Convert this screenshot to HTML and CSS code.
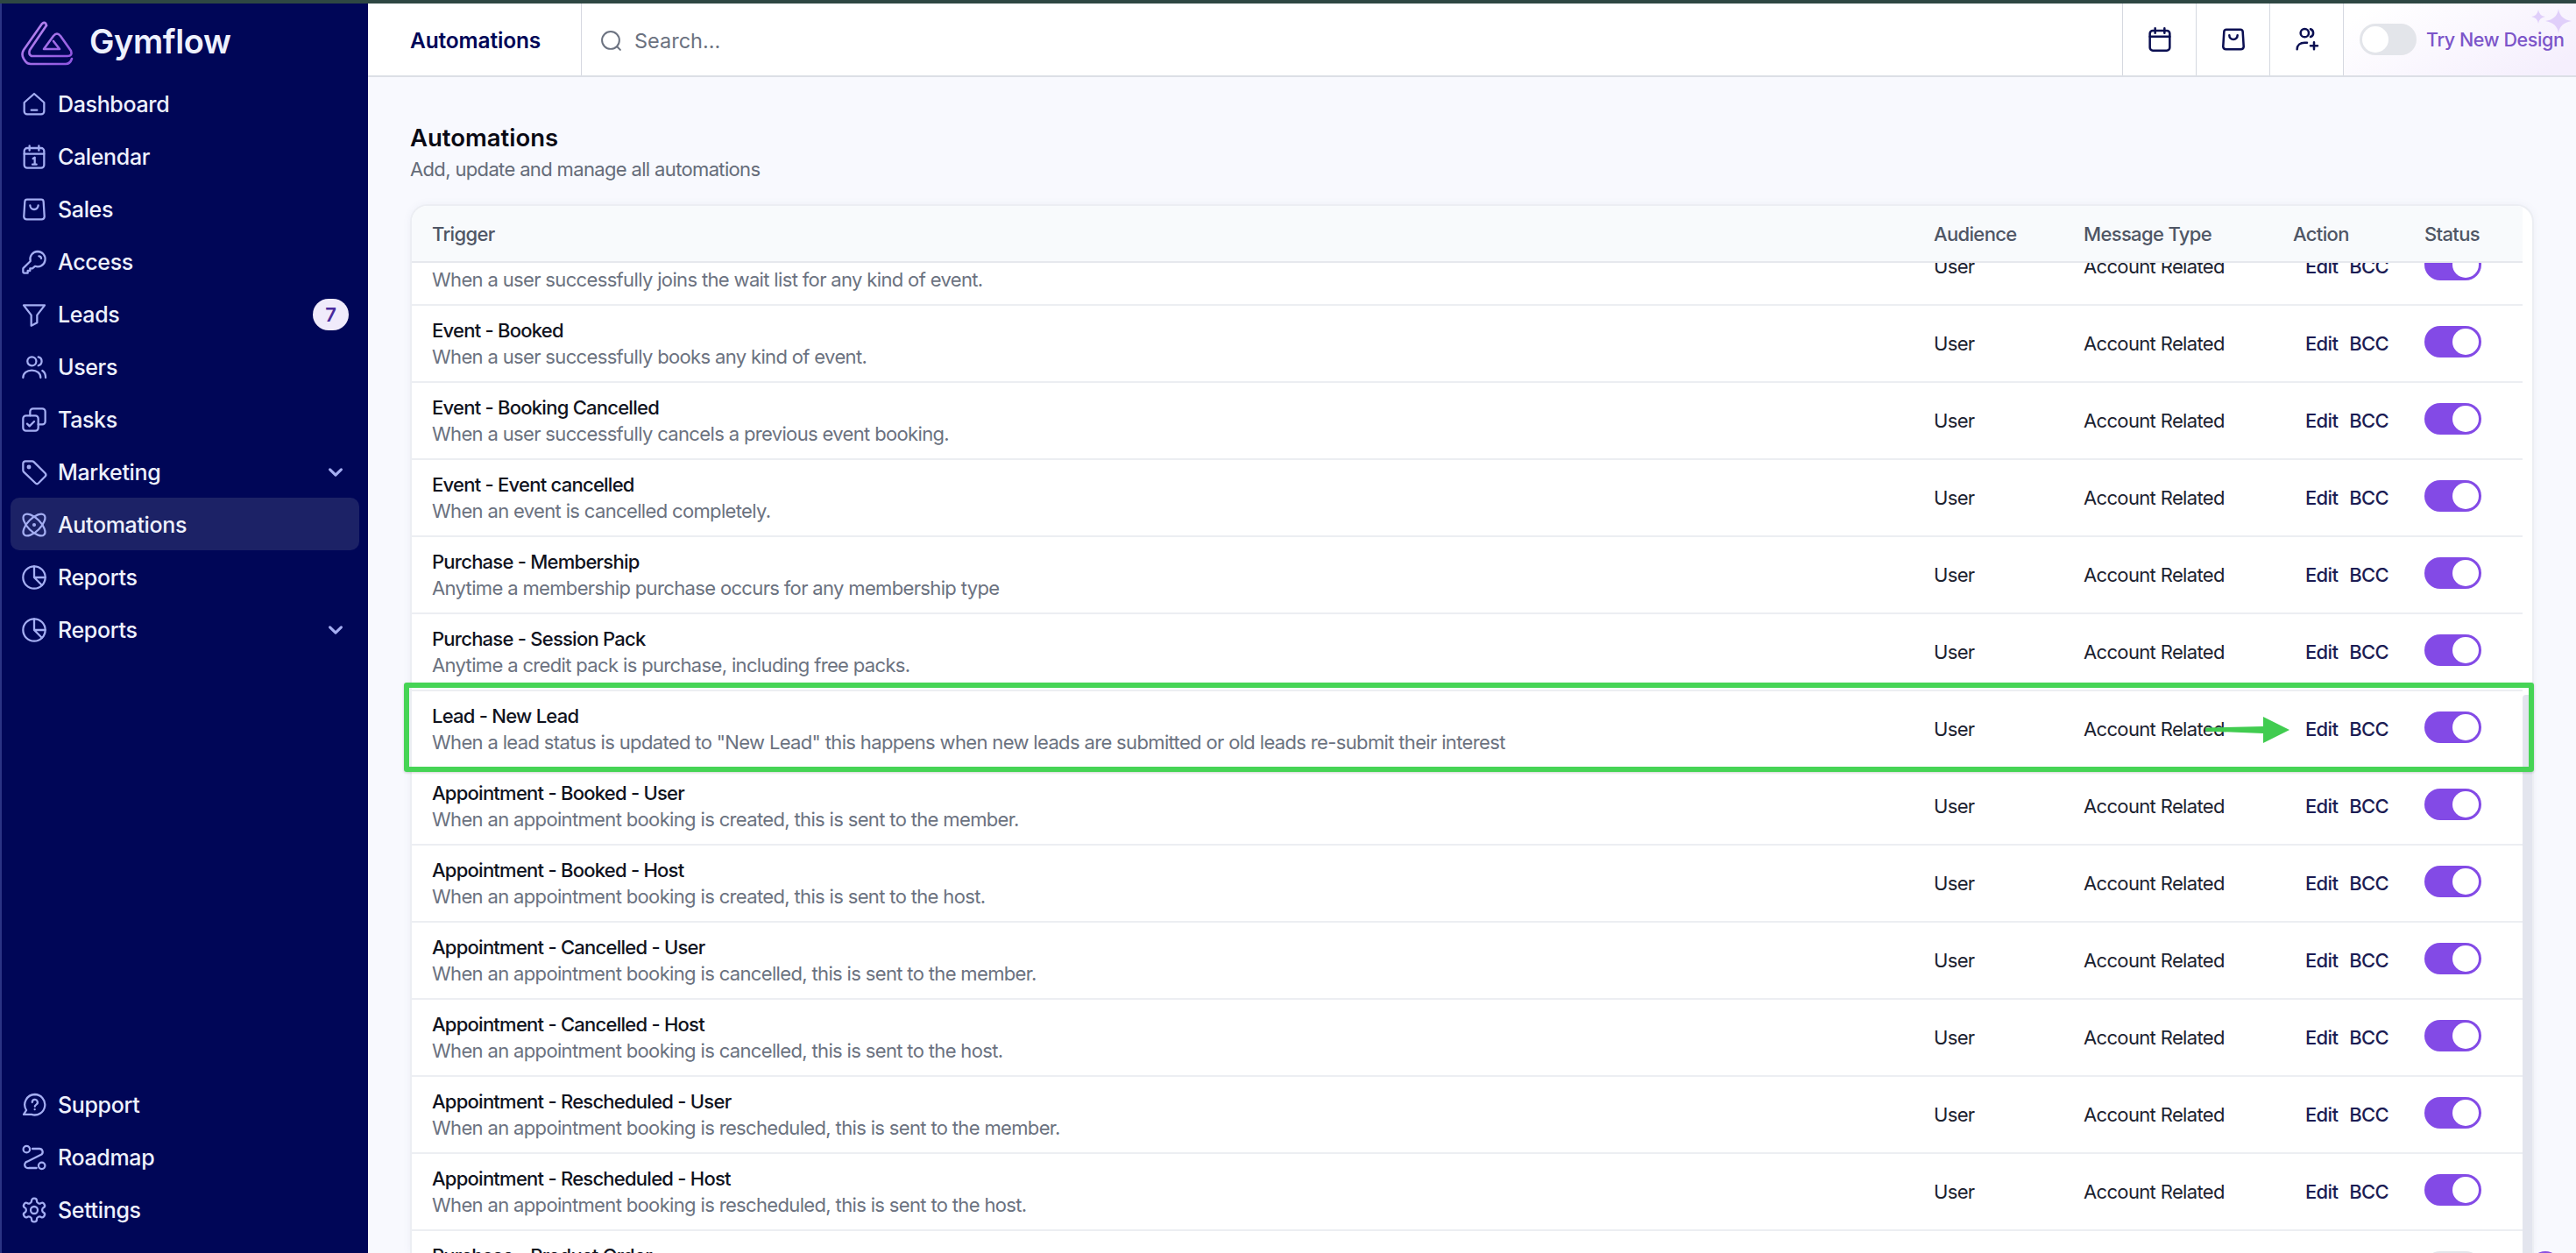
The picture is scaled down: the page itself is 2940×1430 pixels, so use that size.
FILE: index.html
```html
<!DOCTYPE html>
<html lang="en">
<head>
    <meta charset="UTF-8">
    <title>Automations - Gymflow</title>
    <link rel="stylesheet" href="styles.css">
</head>
<body>
    <svg class="sprite" xmlns="http://www.w3.org/2000/svg">
        <symbol id="i-home" viewBox="0 0 24 24"><path d="M3.5 10.5 12 3l8.5 7.500V18a2.500 2.500 0 0 1-2.500 2.500H6A2.500 2.500 0 0 1 3.500 18z"/><path d="M9.500 17h5"/></symbol>
        <symbol id="i-calendar-day" viewBox="0 0 24 24"><rect x="3.5" y="4.5" width="17" height="17" rx="2.5"/><path d="M3.500 9.500h17M8 2.500v4M16 2.500v4M11 13.500l1.500-1v6M10.500 18.500h3.500"/></symbol>
        <symbol id="i-calendar" viewBox="0 0 24 24"><rect x="3.5" y="4.5" width="17" height="17" rx="2.5"/><path d="M3.500 9.500h17M8 2.500v4M16 2.500v4"/></symbol>
        <symbol id="i-bag" viewBox="0 0 24 24"><path d="M6 3.500h12a2 2 0 0 1 2 1.800l.8 13a2.500 2.500 0 0 1-2.500 2.200H5.700a2.500 2.500 0 0 1-2.500-2.200l.8-13a2 2 0 0 1 2-1.800z"/><path d="M8.500 8.500a3.500 3.500 0 0 0 7 0"/></symbol>
        <symbol id="i-key" viewBox="0 0 24 24"><path d="M15 3a6.500 6.500 0 1 1-2.300 12.600L10.500 17.500H8.500v2h-2v2H3.500a1 1 0 0 1-1-1v-2.600a1 1 0 0 1 .3-.7l6-6A6.500 6.500 0 0 1 15 3z"/><path d="M16 7a2 2 0 0 1 2 2"/></symbol>
        <symbol id="i-funnel" viewBox="0 0 24 24"><path d="M3 4h18l-6.500 8.500V19l-5 2.500v-9z"/></symbol>
        <symbol id="i-users" viewBox="0 0 24 24"><circle cx="10" cy="7" r="3.8"/><path d="M2.500 21c0-3.800 3.200-6.300 7.500-6.300s7.500 2.500 7.500 6.300M15.500 3.300a3.800 3.800 0 0 1 0 7.400M19 15c1.700 1 2.800 3.200 2.800 6"/></symbol>
        <symbol id="i-tasks" viewBox="0 0 24 24"><rect x="2.5" y="8.5" width="13" height="13" rx="2.5"/><path d="M8.500 8.500V5A2.500 2.500 0 0 1 11 2.500h8A2.500 2.500 0 0 1 21.500 5v8.500a2.500 2.500 0 0 1-2.500 2.500h-3.500M6 15.500l2 2 4-4"/></symbol>
        <symbol id="i-tag" viewBox="0 0 24 24"><path d="M2.500 4.500a2 2 0 0 1 2-2h5.800a2 2 0 0 1 1.400.6l9.700 9.700a2 2 0 0 1 0 2.800l-5.600 5.600a2 2 0 0 1-2.800 0L3.100 11.700a2 2 0 0 1-.6-1.400z"/><circle cx="7.5" cy="7.5" r="1"/></symbol>
        <symbol id="i-atom" viewBox="0 0 24 24"><ellipse cx="12" cy="12" rx="12" ry="5.5" transform="rotate(45 12 12)"/><ellipse cx="12" cy="12" rx="12" ry="5.5" transform="rotate(-45 12 12)"/><circle cx="12" cy="12" r=".7"/></symbol>
        <symbol id="i-pie" viewBox="0 0 24 24"><circle cx="12" cy="12" r="9.5"/><path d="M12 2.500V12l6.700 6.700M12 12h9.500"/></symbol>
        <symbol id="i-chevron" viewBox="0 0 24 24"><path d="M5 8.500l7 7 7-7"/></symbol>
        <symbol id="i-support" viewBox="0 0 24 24"><path d="M12.500 3a8.800 8.800 0 1 1-2.700 17.200H3l2.300-3.700A8.800 8.800 0 0 1 12.500 3z"/><path d="M10.300 9.800a2.300 2.300 0 1 1 3.500 1.900c-.8.500-1.200.9-1.200 1.700M12.500 15.800v.1"/></symbol>
        <symbol id="i-road" viewBox="0 0 24 24"><circle cx="5.5" cy="5" r="2.8"/><circle cx="18.5" cy="19" r="2.8"/><path d="M10.500 4.500h6a2.800 2.800 0 0 1 1.800 4.900L6 15.500a2.800 2.800 0 0 0 1.500 5.500h6.500"/></symbol>
        <symbol id="i-gear" viewBox="0 0 24 24"><path d="M12.22 2h-.44a2 2 0 0 0-2 2v.18a2 2 0 0 1-1 1.73l-.43.25a2 2 0 0 1-2 0l-.15-.08a2 2 0 0 0-2.73.73l-.22.38a2 2 0 0 0 .73 2.73l.15.1a2 2 0 0 1 1 1.72v.51a2 2 0 0 1-1 1.74l-.15.09a2 2 0 0 0-.73 2.73l.22.38a2 2 0 0 0 2.73.73l.15-.08a2 2 0 0 1 2 0l.43.25a2 2 0 0 1 1 1.73V20a2 2 0 0 0 2 2h.44a2 2 0 0 0 2-2v-.18a2 2 0 0 1 1-1.73l.43-.25a2 2 0 0 1 2 0l.15.08a2 2 0 0 0 2.73-.73l.22-.39a2 2 0 0 0-.73-2.73l-.15-.08a2 2 0 0 1-1-1.74v-.5a2 2 0 0 1 1-1.74l.15-.09a2 2 0 0 0 .73-2.73l-.22-.38a2 2 0 0 0-2.73-.73l-.15.08a2 2 0 0 1-2 0l-.43-.25a2 2 0 0 1-1-1.73V4a2 2 0 0 0-2-2z"/><circle cx="12" cy="12" r="3"/></symbol>
        <symbol id="i-search" viewBox="0 0 24 24"><circle cx="11.5" cy="11.5" r="9.5"/><path d="M18.500 18.500l3.500 3.500"/></symbol>
        <symbol id="i-user-plus" viewBox="0 0 24 24"><circle cx="10" cy="6.5" r="3.5"/><path d="M3.500 20.500c0-3.500 2.700-5.700 6.500-5.700h2M15 3.200a3.500 3.500 0 0 1 0 6.600M18 14.500v6M15 17.500h6"/></symbol>
    </svg>

    <div class="app">
        <aside class="sidebar">
            <div class="brand">
                <svg class="brand-logo" viewBox="0 0 60 52">
                    <defs>
                        <linearGradient id="logoGrad" x1="0" y1="0" x2="1" y2="1">
                            <stop offset="0" stop-color="#b98af0"/>
                            <stop offset="1" stop-color="#8f55e0"/>
                        </linearGradient>
                    </defs>
                    <path d="M29 5Q28 0 24 3L3 33Q0 38 3 43L5 46Q7 49 11 49H51Q56 49 58 43"/>
                    <path d="M29 5L10 33Q8 38 12 40H53Q59 40 57 34L45 17Q41 12 37 17L26 32H44L37 23"/>
                </svg>
                <span class="brand-name">Gymflow</span>
            </div>

            <nav class="nav">
                <a class="nav-item"><svg class="nav-icon"><use href="#i-home"/></svg>Dashboard</a>
                <a class="nav-item"><svg class="nav-icon"><use href="#i-calendar-day"/></svg>Calendar</a>
                <a class="nav-item"><svg class="nav-icon"><use href="#i-bag"/></svg>Sales</a>
                <a class="nav-item"><svg class="nav-icon"><use href="#i-key"/></svg>Access</a>
                <a class="nav-item"><svg class="nav-icon"><use href="#i-funnel"/></svg>Leads<span class="nav-badge">7</span></a>
                <a class="nav-item"><svg class="nav-icon"><use href="#i-users"/></svg>Users</a>
                <a class="nav-item"><svg class="nav-icon"><use href="#i-tasks"/></svg>Tasks</a>
                <a class="nav-item"><svg class="nav-icon"><use href="#i-tag"/></svg>Marketing<svg class="nav-chevron"><use href="#i-chevron"/></svg></a>
                <a class="nav-item active"><svg class="nav-icon"><use href="#i-atom"/></svg>Automations</a>
                <a class="nav-item"><svg class="nav-icon"><use href="#i-pie"/></svg>Reports</a>
                <a class="nav-item"><svg class="nav-icon"><use href="#i-pie"/></svg>Reports<svg class="nav-chevron"><use href="#i-chevron"/></svg></a>
            </nav>

            <nav class="nav nav-bottom">
                <a class="nav-item"><svg class="nav-icon"><use href="#i-support"/></svg>Support</a>
                <a class="nav-item"><svg class="nav-icon"><use href="#i-road"/></svg>Roadmap</a>
                <a class="nav-item"><svg class="nav-icon"><use href="#i-gear"/></svg>Settings</a>
            </nav>
        </aside>

        <main class="main">
            <header class="topbar">
                <div class="topbar-title">Automations</div>
                <div class="topbar-search">
                    <svg class="search-icon"><use href="#i-search"/></svg>
                    <span>Search...</span>
                </div>
                <div class="topbar-btn"><svg class="topbar-icon"><use href="#i-calendar"/></svg></div>
                <div class="topbar-btn"><svg class="topbar-icon"><use href="#i-bag"/></svg></div>
                <div class="topbar-btn"><svg class="topbar-icon"><use href="#i-user-plus"/></svg></div>
                <div class="try-design">
                    <span class="try-switch"><span class="try-knob"></span></span>
                    <span class="try-text">Try New Design</span>
                    <svg class="sparkles" viewBox="0 0 50 34">
                        <path d="M9 3q1 7 8 8q-7 1-8 8q-1-7-8-8q7-1 8-8z"/>
                        <path d="M32 2q1.500 12 15 14q-13.500 2-15 14q-1.500-12-15-14q13.500-2 15-14z"/>
                    </svg>
                </div>
            </header>

            <section class="content">
                <h1 class="page-title">Automations</h1>
                <p class="page-sub">Add, update and manage all automations</p>

                <div class="card">
                    <div class="table-head">
                        <div>Trigger</div>
                        <div>Audience</div>
                        <div>Message Type</div>
                        <div>Action</div>
                        <div>Status</div>
                    </div>
                    <div class="table-scroll">
                        <div class="rows">
                            <div class="row">
                                <div class="row-main"><div class="row-title">Event - Wait List</div><div class="row-desc">When a user successfully joins the wait list for any kind of event.</div></div>
                                <div>User</div><div>Account Related</div>
                                <div class="row-actions"><a>Edit</a><a>BCC</a></div>
                                <div><span class="toggle"></span></div>
                            </div>
                            <div class="row">
                                <div class="row-main"><div class="row-title">Event - Booked</div><div class="row-desc">When a user successfully books any kind of event.</div></div>
                                <div>User</div><div>Account Related</div>
                                <div class="row-actions"><a>Edit</a><a>BCC</a></div>
                                <div><span class="toggle"></span></div>
                            </div>
                            <div class="row">
                                <div class="row-main"><div class="row-title">Event - Booking Cancelled</div><div class="row-desc">When a user successfully cancels a previous event booking.</div></div>
                                <div>User</div><div>Account Related</div>
                                <div class="row-actions"><a>Edit</a><a>BCC</a></div>
                                <div><span class="toggle"></span></div>
                            </div>
                            <div class="row">
                                <div class="row-main"><div class="row-title">Event - Event cancelled</div><div class="row-desc">When an event is cancelled completely.</div></div>
                                <div>User</div><div>Account Related</div>
                                <div class="row-actions"><a>Edit</a><a>BCC</a></div>
                                <div><span class="toggle"></span></div>
                            </div>
                            <div class="row">
                                <div class="row-main"><div class="row-title">Purchase - Membership</div><div class="row-desc">Anytime a membership purchase occurs for any membership type</div></div>
                                <div>User</div><div>Account Related</div>
                                <div class="row-actions"><a>Edit</a><a>BCC</a></div>
                                <div><span class="toggle"></span></div>
                            </div>
                            <div class="row">
                                <div class="row-main"><div class="row-title">Purchase - Session Pack</div><div class="row-desc">Anytime a credit pack is purchase, including free packs.</div></div>
                                <div>User</div><div>Account Related</div>
                                <div class="row-actions"><a>Edit</a><a>BCC</a></div>
                                <div><span class="toggle"></span></div>
                            </div>
                            <div class="row">
                                <div class="row-main"><div class="row-title">Lead - New Lead</div><div class="row-desc">When a lead status is updated to "New Lead" this happens when new leads are submitted or old leads re-submit their interest</div></div>
                                <div>User</div><div>Account Related</div>
                                <div class="row-actions"><a>Edit</a><a>BCC</a></div>
                                <div><span class="toggle"></span></div>
                            </div>
                            <div class="row">
                                <div class="row-main"><div class="row-title">Appointment - Booked - User</div><div class="row-desc">When an appointment booking is created, this is sent to the member.</div></div>
                                <div>User</div><div>Account Related</div>
                                <div class="row-actions"><a>Edit</a><a>BCC</a></div>
                                <div><span class="toggle"></span></div>
                            </div>
                            <div class="row">
                                <div class="row-main"><div class="row-title">Appointment - Booked - Host</div><div class="row-desc">When an appointment booking is created, this is sent to the host.</div></div>
                                <div>User</div><div>Account Related</div>
                                <div class="row-actions"><a>Edit</a><a>BCC</a></div>
                                <div><span class="toggle"></span></div>
                            </div>
                            <div class="row">
                                <div class="row-main"><div class="row-title">Appointment - Cancelled - User</div><div class="row-desc">When an appointment booking is cancelled, this is sent to the member.</div></div>
                                <div>User</div><div>Account Related</div>
                                <div class="row-actions"><a>Edit</a><a>BCC</a></div>
                                <div><span class="toggle"></span></div>
                            </div>
                            <div class="row">
                                <div class="row-main"><div class="row-title">Appointment - Cancelled - Host</div><div class="row-desc">When an appointment booking is cancelled, this is sent to the host.</div></div>
                                <div>User</div><div>Account Related</div>
                                <div class="row-actions"><a>Edit</a><a>BCC</a></div>
                                <div><span class="toggle"></span></div>
                            </div>
                            <div class="row">
                                <div class="row-main"><div class="row-title">Appointment - Rescheduled - User</div><div class="row-desc">When an appointment booking is rescheduled, this is sent to the member.</div></div>
                                <div>User</div><div>Account Related</div>
                                <div class="row-actions"><a>Edit</a><a>BCC</a></div>
                                <div><span class="toggle"></span></div>
                            </div>
                            <div class="row">
                                <div class="row-main"><div class="row-title">Appointment - Rescheduled - Host</div><div class="row-desc">When an appointment booking is rescheduled, this is sent to the host.</div></div>
                                <div>User</div><div>Account Related</div>
                                <div class="row-actions"><a>Edit</a><a>BCC</a></div>
                                <div><span class="toggle"></span></div>
                            </div>
                            <div class="row">
                                <div class="row-main"><div class="row-title">Purchase - Product Order</div><div class="row-desc">Anytime a product order is placed.</div></div>
                                <div>User</div><div>Account Related</div>
                                <div class="row-actions"><a>Edit</a><a>BCC</a></div>
                                <div><span class="toggle off"></span></div>
                            </div>
                        </div>
                        <div class="scroll-track"><div class="scroll-thumb"></div></div>
                    </div>
                </div>
            </section>
        </main>
    </div>

    <!-- annotation drawn over the screenshot -->
    <div class="mark-box"></div>
    <svg class="mark-arrow" viewBox="0 0 96 30"><path d="M0 12.500L66 11V0L96 15L66 30V19L0 16.500z"/></svg>
    <div class="chat-dot"></div>
</body>
</html>
```

FILE: styles.css
```css
* {
    box-sizing: border-box;
}

html, body {
    margin: 0;
    height: 100%;
    overflow: hidden;
}

body {
    font-family: Inter, 'Noto Sans', sans-serif;
    background: #f8f9fe;
    border-top: 4px solid #2e4743;
    position: relative;
    color: #1a1f2e;
}

.sprite {
    display: none;
}

.app {
    display: flex;
    height: 100%;
}

/* sidebar */
.sidebar {
    width: 420px;
    flex: none;
    display: flex;
    flex-direction: column;
    background: #000657;
    border-left: 2px solid #2b3384;
    padding-bottom: 20px;
}

.brand {
    height: 84px;
    display: flex;
    align-items: center;
    padding-left: 22px;
    flex: none;
}

.brand-logo {
    width: 60px;
    height: 52px;
    margin-top: 8px;
    fill: none;
    stroke: url(#logoGrad);
    stroke-width: 2.6;
    stroke-linejoin: round;
    stroke-linecap: round;
}

.brand-name {
    margin: 2px 0 0 18px;
    font-size: 38px;
    font-weight: 600;
    letter-spacing: -0.4px;
    color: #eef1fd;
}

.nav {
    display: flex;
    flex-direction: column;
    padding: 0 10px;
}

.nav-bottom {
    margin-top: auto;
}

.nav-item {
    height: 60px;
    display: flex;
    align-items: center;
    padding: 1px 16px 0 11px;
    border-radius: 10px;
    font-size: 25px;
    font-weight: 500;
    letter-spacing: -0.35px;
    color: #eef1fd;
}

.nav-item.active {
    background: #1c2266;
}

.nav-icon {
    width: 32px;
    height: 32px;
    margin-right: 11px;
    flex: none;
    fill: none;
    stroke: #a4aef2;
    stroke-width: 1.7;
    stroke-linecap: round;
    stroke-linejoin: round;
}

.nav-badge {
    margin-left: auto;
    margin-right: -4px;
    width: 41px;
    height: 36px;
    border-radius: 18px;
    background: #f0ebfb;
    color: #4a2a9c;
    font-size: 22px;
    font-weight: 600;
    display: flex;
    align-items: center;
    justify-content: center;
}

.nav-chevron {
    margin-left: auto;
    width: 22px;
    height: 22px;
    fill: none;
    stroke: #a4aef2;
    stroke-width: 3.4;
    stroke-linecap: round;
    stroke-linejoin: round;
}

/* top bar */
.main {
    flex: 1;
    min-width: 0;
    display: flex;
    flex-direction: column;
}

.topbar {
    height: 84px;
    flex: none;
    display: flex;
    align-items: stretch;
    background: #fff;
    border-bottom: 2px solid #dcdfe6;
}

.topbar-title {
    width: 244px;
    padding: 2px 0 0 48px;
    display: flex;
    align-items: center;
    border-right: 1px solid #d5d8e0;
    font-size: 24.5px;
    font-weight: 600;
    letter-spacing: -0.15px;
    color: #000657;
}

.topbar-search {
    flex: 1;
    display: flex;
    align-items: center;
    padding: 2px 0 0 21px;
    font-size: 23.5px;
    color: #6b7280;
}

.search-icon {
    width: 25px;
    height: 25px;
    margin-right: 14px;
    fill: none;
    stroke: #6b7280;
    stroke-width: 1.9;
    stroke-linecap: round;
}

.topbar-btn {
    width: 84px;
    display: flex;
    align-items: center;
    justify-content: center;
    border-left: 1px solid #d5d8e0;
}

.topbar-icon {
    width: 32px;
    height: 32px;
    fill: none;
    stroke: #0b0f52;
    stroke-width: 1.9;
    stroke-linecap: round;
    stroke-linejoin: round;
}

.try-design {
    width: 266px;
    position: relative;
    display: flex;
    align-items: center;
    padding-left: 18px;
    border-left: 1px solid #d5d8e0;
    background: linear-gradient(150deg, #fff 10%, #f5effd 90%);
}

.try-switch {
    width: 65px;
    height: 36px;
    border-radius: 18px;
    background: #e3e5ea;
    padding: 3px;
    flex: none;
}

.try-knob {
    display: block;
    width: 30px;
    height: 30px;
    border-radius: 50%;
    background: #fff;
}

.try-text {
    margin-left: 11px;
    font-size: 21.5px;
    font-weight: 500;
    letter-spacing: -0.4px;
    color: #7c55c9;
    white-space: nowrap;
}

.sparkles {
    position: absolute;
    top: 4px;
    right: 2px;
    width: 50px;
    height: 34px;
    fill: #e0cffa;
}

/* page content */
.content {
    flex: 1;
    min-height: 0;
    display: flex;
    flex-direction: column;
    padding: 51px 48px 0 48px;
}

.page-title {
    margin: 0;
    font-size: 27.5px;
    line-height: 36px;
    font-weight: 600;
    color: #0a0a14;
}

.page-sub {
    margin: 2px 0 24px;
    font-size: 22px;
    letter-spacing: -0.65px;
    line-height: 32px;
    color: #656c79;
}

.card {
    flex: 1;
    min-height: 0;
    display: flex;
    flex-direction: column;
    background: #fff;
    border: 2px solid #eceef3;
    border-bottom: 0;
    border-radius: 20px 20px 0 0;
    box-shadow: 0 0 8px rgba(120, 125, 170, 0.08);
    overflow: hidden;
}

.table-head,
.row {
    display: grid;
    grid-template-columns: 1737px 171px 239px 150px 1fr;
    align-items: center;
}

.table-head {
    flex: none;
    height: 65px;
    margin-right: 11px;
    background: #f8fafc;
    border-bottom: 2px solid #e6e8ed;
    font-size: 22px;
    letter-spacing: -0.65px;
    font-weight: 500;
    color: #4f5665;
    position: relative;
    z-index: 1;
}

.table-head > :first-child {
    padding-left: 23px;
}

.table-scroll {
    flex: 1;
    min-height: 0;
    display: flex;
    overflow: hidden;
}

/* list is scrolled down a little in the shot */
.rows {
    flex: 1;
    min-width: 0;
    margin-top: -39px;
}

.row {
    height: 88px;
    border-bottom: 2px solid #eceef2;
    font-size: 22px;
    letter-spacing: -0.65px;
    color: #1c2230;
}

.row-main {
    padding-left: 23px;
}

.row-title {
    line-height: 30px;
    font-weight: 500;
    letter-spacing: -0.75px;
    color: #10131e;
}

.row-desc {
    line-height: 30px;
    color: #6b7280;
}

.row-actions {
    display: flex;
    gap: 13px;
    padding-left: 14px;
    color: #1c1d54;
    font-weight: 500;
}

.toggle {
    display: block;
    position: relative;
    width: 65px;
    height: 36px;
    margin-top: -4px;
    border-radius: 18px;
    background: #834ae6;
}

.toggle::after {
    content: "";
    position: absolute;
    right: 3px;
    top: 3px;
    width: 30px;
    height: 30px;
    border-radius: 50%;
    background: #fff;
}

.toggle.off {
    background: #e3e5ea;
}

.scroll-track {
    width: 11px;
    flex: none;
}

.scroll-thumb {
    margin-top: 493px;
    height: 700px;
    background: #e3e5ee;
    border-radius: 4px 0 0 0;
}

/* annotation */
.mark-box {
    position: absolute;
    left: 461px;
    top: 775px;
    width: 2431px;
    height: 102px;
    border: 6px solid #46d455;
    border-radius: 3px;
    box-shadow: 0 1px 3px rgba(0, 0, 0, 0.18);
}

.mark-arrow {
    position: absolute;
    left: 2517px;
    top: 814px;
    width: 96px;
    height: 30px;
    fill: #41cc50;
}

.chat-dot {
    position: absolute;
    left: 2888px;
    top: 1424px;
    width: 34px;
    height: 34px;
    border-radius: 50%;
    background: #8a4fe0;
}
```
